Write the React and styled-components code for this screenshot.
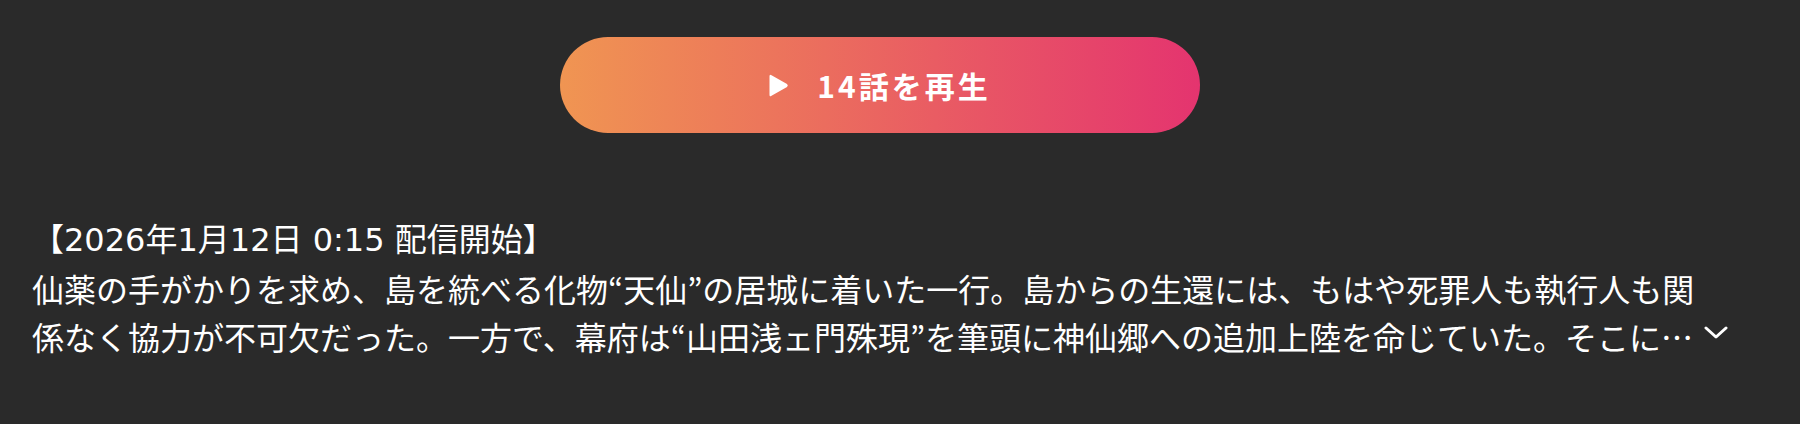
import React from "react";
import styled, { createGlobalStyle } from "styled-components";

const GlobalStyle = createGlobalStyle`
  html, body {
    margin: 0;
    padding: 0;
    background: #2a2a2a;
  }
  body {
    font-family: "Noto Sans CJK JP", "Noto Sans", sans-serif;
    color: #ffffff;
  }
`;

const Page = styled.div`
  width: 1800px;
  height: 424px;
  box-sizing: border-box;
  padding: 37px 72px 0 32px;
  background: #2a2a2a;
  display: flex;
  flex-direction: column;
`;

const PlayRow = styled.div`
  display: flex;
  justify-content: center;
`;

const PlayButton = styled.button`
  width: 640px;
  height: 96px;
  border: none;
  border-radius: 48px;
  background: linear-gradient(90deg, #f09552 0%, #e4346f 100%);
  color: #ffffff;
  display: flex;
  align-items: center;
  justify-content: center;
  gap: 28px;
  padding: 0;
  cursor: pointer;
  font-family: "Noto Sans CJK JP", "Noto Sans", sans-serif;
  font-weight: 700;
  font-size: 30px;
  letter-spacing: 3px;
`;

const PlayIcon = styled.svg`
  width: 20px;
  height: 25px;
  flex: none;
`;

const Description = styled.div`
  margin-top: 83px;
  font-size: 32px;
  line-height: 48px;
  font-weight: 400;
  color: #ffffff;
`;

const DateLine = styled.div`
  white-space: nowrap;
  font-family: "DejaVu Sans", "Noto Sans CJK JP", sans-serif;
`;

const Line = styled.div`
  white-space: nowrap;
  display: flex;
  align-items: center;
`;

const ToggleButton = styled.button`
  border: none;
  background: transparent;
  padding: 0;
  margin: -7px 0 0 11px;
  width: 24px;
  height: 24px;
  display: inline-flex;
  align-items: center;
  justify-content: center;
  color: #ffffff;
  cursor: pointer;
`;

export default function App() {
  return (
    <>
      <GlobalStyle />
      <Page>
        <PlayRow>
          <PlayButton>
            <PlayIcon viewBox="0 0 20 25" aria-hidden="true">
              <path
                d="M2.5 2.2 Q0.5 0.8 0.5 3.2 V21.8 Q0.5 24.2 2.5 22.8 L18 14 Q19.6 12.5 18 11 Z"
                fill="#ffffff"
              />
            </PlayIcon>
            <span>14話を再生</span>
          </PlayButton>
        </PlayRow>
        <Description>
          <DateLine>【2026年1月12日 0:15 配信開始】</DateLine>
          <Line>
            仙薬の手がかりを求め、島を統べる化物“天仙”の居城に着いた一行。島からの生還には、もはや死罪人も執行人も関
          </Line>
          <Line>
            係なく協力が不可欠だった。一方で、幕府は“山田浅ェ門殊現”を筆頭に神仙郷への追加上陸を命じていた。そこに…
            <ToggleButton aria-label="もっと見る">
              <svg width="24" height="13" viewBox="0 0 24 13" fill="none">
                <path
                  d="M2 2 L12 11 L22 2"
                  stroke="#ffffff"
                  strokeWidth="3"
                  strokeLinecap="round"
                  strokeLinejoin="round"
                />
              </svg>
            </ToggleButton>
          </Line>
        </Description>
      </Page>
    </>
  );
}
